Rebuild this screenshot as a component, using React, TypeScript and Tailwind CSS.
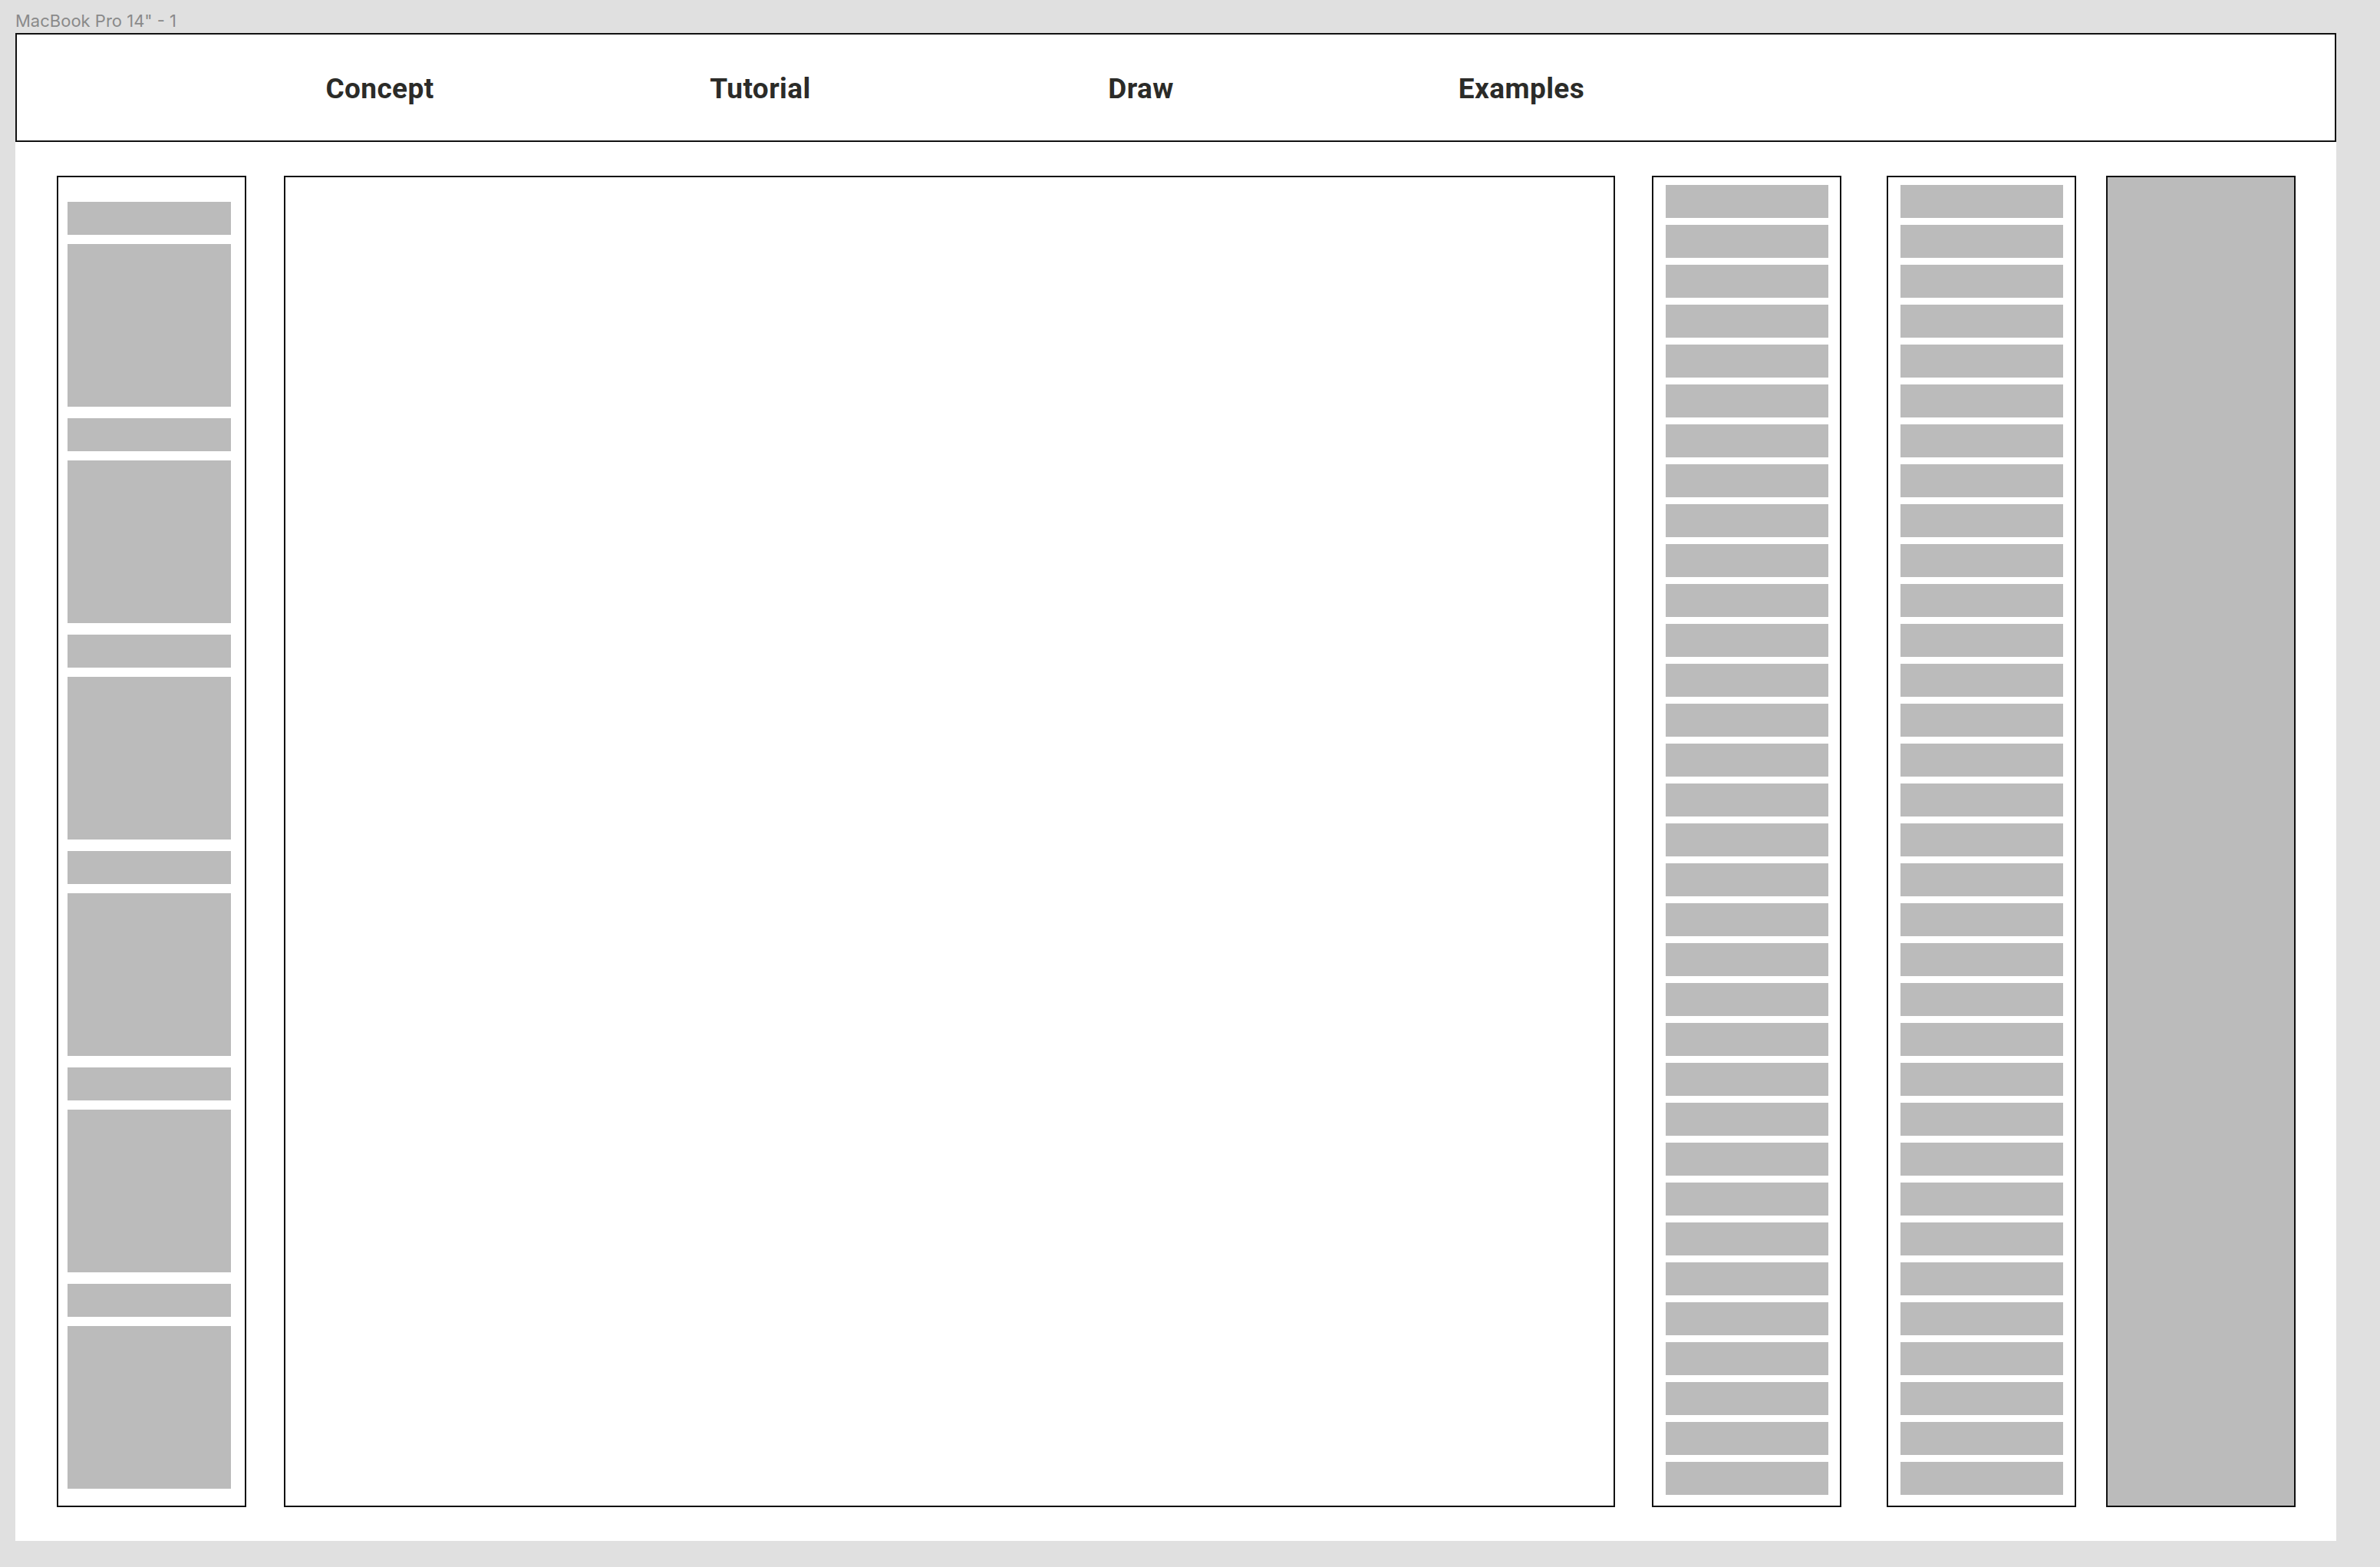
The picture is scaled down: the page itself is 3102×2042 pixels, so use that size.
const NAV = ["Concept", "Tutorial", "Draw", "Examples"];
const LEFT_GROUPS = Array.from({ length: 6 }, (_, i) => i);
const ROWS = Array.from({ length: 33 }, (_, i) => i);

function RowPanel({ className }: { className: string }) {
  return (
    <div className={`h-[1735px] w-[247px] shrink-0 border-2 border-[#111111] bg-white pl-[16px] pt-[10px] ${className}`}>
      <div className="flex flex-col gap-[9px]">
        {ROWS.map((r) => (
          <div key={r} className="h-[43px] w-[212px] bg-[#bbbbbb]" />
        ))}
      </div>
    </div>
  );
}

export default function App() {
  return (
    <div className="h-[2042px] w-[3102px] overflow-hidden bg-[#e0e0e0] pl-[20px] font-['Inter',sans-serif]">
      <div className="flex h-[43px] items-center pt-[11px] text-[22px] leading-none text-[#8a8a8a]">
        MacBook Pro 14" - 1
      </div>
      <div className="h-[1965px] w-[3025px] bg-white">
        <header className="flex h-[142px] items-center border-2 border-[#111111] bg-white pl-[225px] pt-[3px]">
          {NAV.map((n) => (
            <div
              key={n}
              className="w-[496px] text-center font-['Roboto',sans-serif] text-[37px] font-bold leading-none tracking-[0.4px] text-[#2b2b28]"
            >
              {n}
            </div>
          ))}
        </header>
        <div className="flex pl-[54px] pt-[44px]">
          <div className="h-[1735px] w-[247px] shrink-0 border-2 border-[#111111] bg-white pl-[12px] pt-[32px]">
            <div className="flex flex-col gap-[15px]">
              {LEFT_GROUPS.map((g) => (
                <div key={g} className="flex flex-col gap-[12px]">
                  <div className="h-[43px] w-[213px] bg-[#bbbbbb]" />
                  <div className="h-[212px] w-[213px] bg-[#bbbbbb]" />
                </div>
              ))}
            </div>
          </div>
          <div className="ml-[49px] h-[1735px] w-[1735px] shrink-0 border-2 border-[#111111] bg-white" />
          <RowPanel className="ml-[48px]" />
          <RowPanel className="ml-[59px]" />
          <div className="ml-[39px] h-[1735px] w-[247px] shrink-0 border-2 border-[#111111] bg-[#bbbbbb]" />
        </div>
      </div>
    </div>
  );
}
